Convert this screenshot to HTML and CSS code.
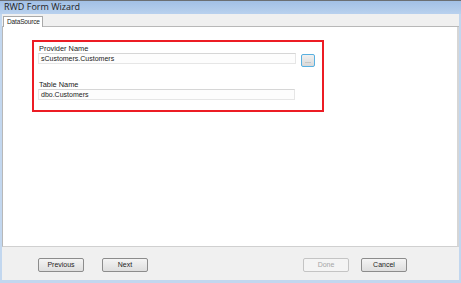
FILE: index.html
```html
<!DOCTYPE html>
<html>
<head>
<meta charset="utf-8">
<link rel="stylesheet" href="styles.css">
</head>
<body>
<div class="window">
  <div class="titlebar">RWD Form Wizard</div>
  <div class="frame">
    <div class="tabs"><div class="tab">DataSource</div></div>
    <div class="panel">
      <div class="group">
        <div class="label">Provider Name</div>
        <div class="row">
          <div class="input wide">sCustomers.Customers</div>
          <div class="browse">...</div>
        </div>
        <div class="label second">Table Name</div>
        <div class="row">
          <div class="input">dbo.Customers</div>
        </div>
      </div>
    </div>
    <div class="footer">
      <div class="btn">Previous</div>
      <div class="btn next">Next</div>
      <div class="spacer"></div>
      <div class="btn disabled">Done</div>
      <div class="btn cancel">Cancel</div>
    </div>
  </div>
</div>
</body>
</html>
```
FILE: styles.css
```css
html, body {
  margin: 0;
  padding: 0;
  background: #ffffff;
}
body {
  font-family: "Liberation Sans", Arial, sans-serif;
  color: #222;
}
.window {
  width: 461px;
  height: 283px;
  display: flex;
  flex-direction: column;
  background: #c2d7ef;
  box-sizing: border-box;
}
.titlebar {
  height: 14px;
  box-sizing: border-box;
  border-top: 1px solid #6b6f74;
  background: linear-gradient(#a2c0e6, #b9d1ee);
  font-size: 9px;
  line-height: 12px;
  padding-left: 4px;
  color: #1e1e1e;
  font-family: "Open Sans", "Liberation Sans", sans-serif;
}
.frame {
  flex: 1;
  margin: 0 2px 3px 2px;
  background: #f0f0f0;
  display: flex;
  flex-direction: column;
}
.tabs {
  height: 12px;
  display: flex;
  align-items: flex-end;
  padding-left: 1px;
  border-bottom: 1px solid #b8b8b8;
}
.tab {
  height: 11px;
  box-sizing: border-box;
  width: 40px;
  background: #ffffff;
  border: 1px solid #a9a9a9;
  border-bottom: none;
  font-size: 6.5px;
  line-height: 10px;
  padding-left: 3px;
  margin-bottom: -1px;
  letter-spacing: -0.15px;
  white-space: nowrap;
  overflow: hidden;
}
.panel {
  flex: 1;
  background: #ffffff;
  border-left: 1px solid #b8b8b8;
  border-right: 2px solid #d6d6d6;
  border-bottom: 1px solid #d0d0d0;
  padding: 13px 0 0 29px;
}
.group {
  width: 292px;
  height: 72px;
  box-sizing: border-box;
  border: 2px solid #ec1c24;
  padding: 2px 0 0 4px;
}
.label {
  font-size: 7.4px;
  line-height: 9px;
  padding-left: 1px;
  color: #222;
}
.label.second {
  margin-top: 13px;
}
.row {
  display: flex;
  align-items: flex-start;
}
.input {
  width: 257px;
  height: 11px;
  box-sizing: border-box;
  border: 1px solid #e6e6e6;
  border-top-color: #d6d6d6;
  background: #fdfdfd;
  font-size: 7px;
  line-height: 9px;
  padding-left: 2px;
  color: #222;
}
.input.wide {
  width: 258px;
}
.browse {
  width: 14px;
  height: 13px;
  box-sizing: border-box;
  margin-left: 5px;
  margin-top: 1px;
  border: 1px solid #58b0e0;
  border-radius: 2px;
  background: linear-gradient(#f0f0f0, #d8d8d8);
  color: #808080;
  font-size: 7px;
  line-height: 11px;
  text-align: center;
}
.footer {
  height: 33px;
  display: flex;
  align-items: flex-start;
  padding: 11px 52px 0 36px;
  box-sizing: border-box;
}
.btn {
  width: 46px;
  height: 14px;
  box-sizing: border-box;
  border: 1px solid #8c8c8c;
  border-radius: 2px;
  background: linear-gradient(#f4f4f4, #dedede);
  font-size: 7px;
  line-height: 12px;
  text-align: center;
  color: #1e1e1e;
}
.btn.next {
  margin-left: 18px;
}
.spacer {
  flex: 1;
}
.btn.disabled {
  border-color: #c4c4c4;
  background: #f4f4f4;
  color: #a6a6a6;
}
.btn.cancel {
  margin-left: 12px;
}
```
